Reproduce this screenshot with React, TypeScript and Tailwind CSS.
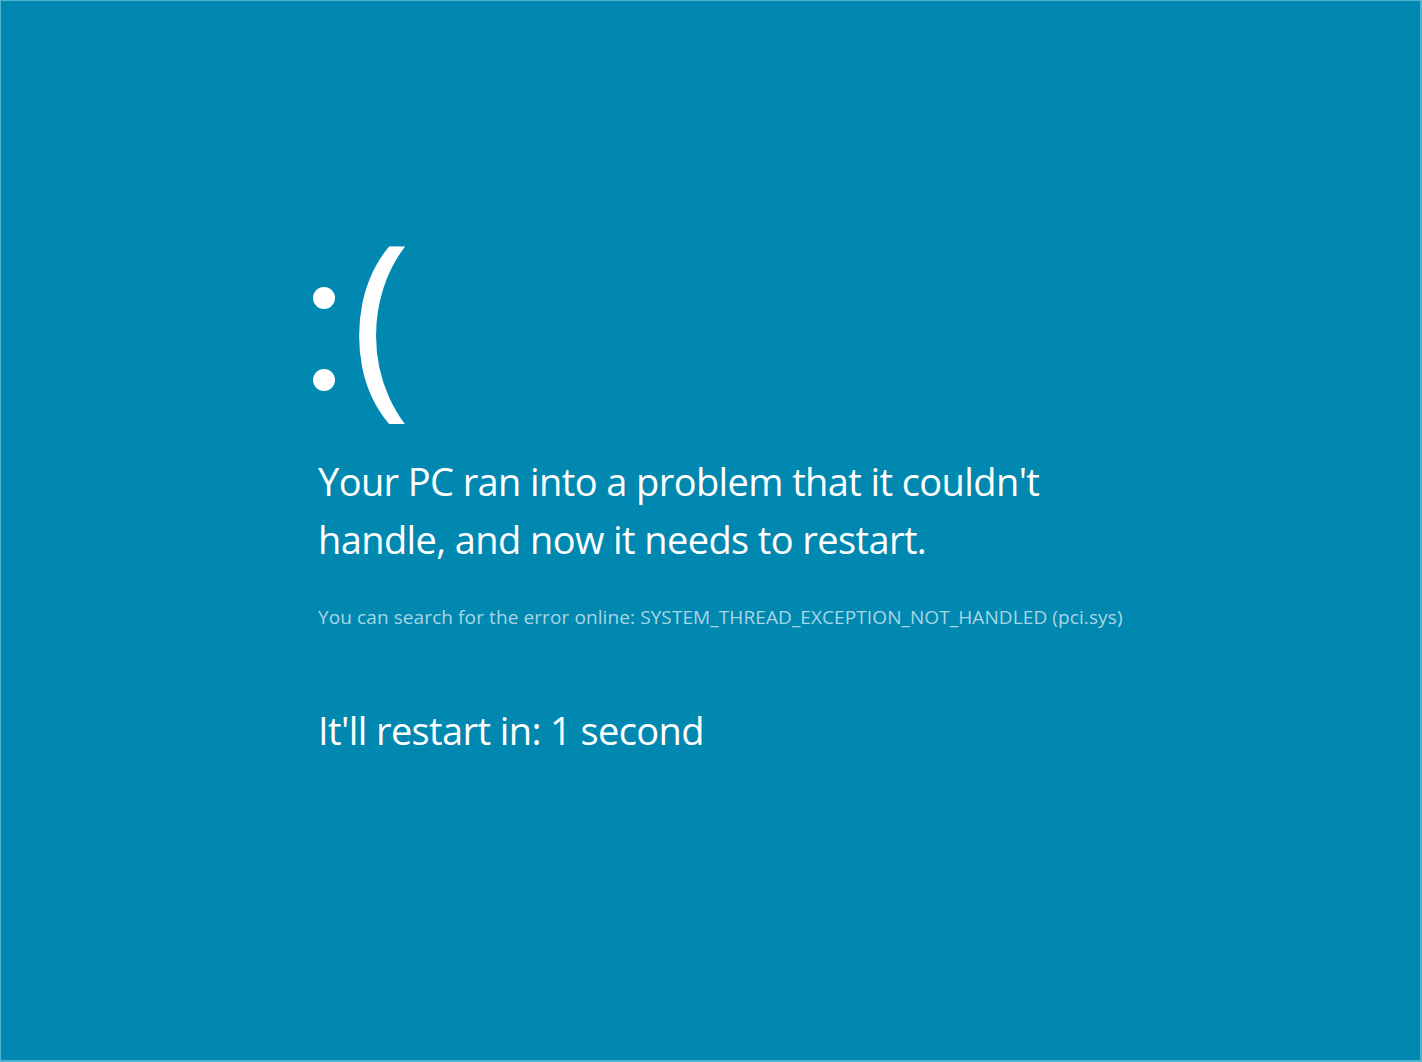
export default function App() {
  return (
    <div
      className="w-[1422px] h-[1062px] bg-[#0088b0] border border-r-2 border-b-2 border-[#4fb2cf] text-white overflow-hidden"
      style={{ fontFamily: '"Open Sans", "Noto Sans", sans-serif' }}
    >
      <div className="flex flex-col items-start pl-[317px] pt-[210px]">
        {/* sad face: colon dots + bracket */}
        <div className="flex items-start leading-none -ml-[5px]">
          <div className="flex flex-col gap-[60px] mt-[76px]" aria-label=":">
            <div className="w-[22px] h-[22px] rounded-full bg-white" />
            <div className="w-[22px] h-[22px] rounded-full bg-white" />
          </div>
          <span className="text-[204px] font-normal ml-[16px]">(</span>
        </div>

        <div className="mt-[37px] text-[38px] leading-[58px] tracking-[-0.6px]">
          <div>Your PC ran into a problem that it couldn't</div>
          <div>handle, and now it needs to restart.</div>
        </div>

        <div className="mt-[35px] text-[19px] tracking-[0.1px] text-[#a9d6e6]">
          You can search for the error online: SYSTEM_THREAD_EXCEPTION_NOT_HANDLED (pci.sys)
        </div>

        <div className="mt-[70px] text-[38px] tracking-[-0.6px]">It'll restart in: 1 second</div>
      </div>
    </div>
  )
}
